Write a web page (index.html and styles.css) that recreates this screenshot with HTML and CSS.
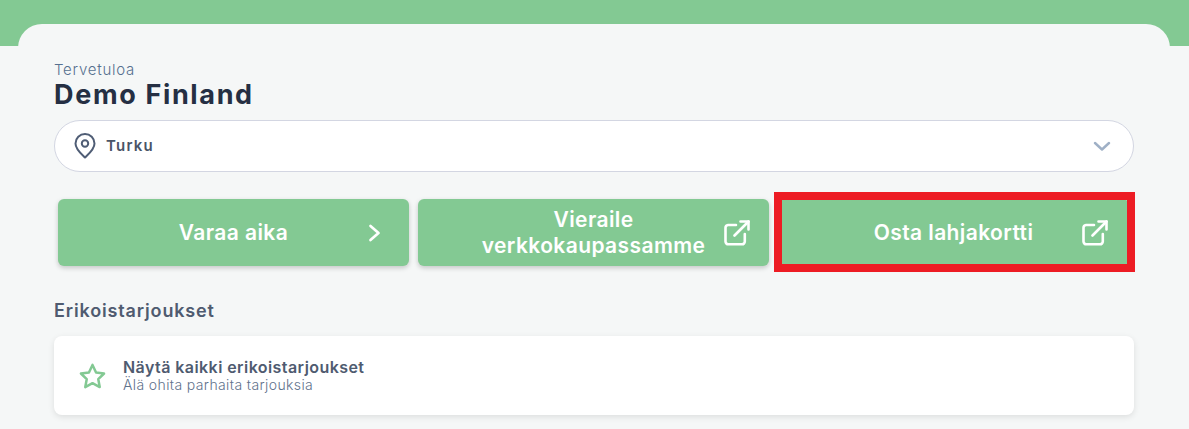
FILE: index.html
```html
<!DOCTYPE html>
<html lang="fi">
<head>
  <meta charset="UTF-8">
  <title>Demo Finland</title>
  <link rel="stylesheet" href="styles.css">
</head>
<body>
  <div class="panel">
    <div class="greeting">Tervetuloa</div>
    <h1 class="name">Demo Finland</h1>
    <div class="location">
      <svg class="pin" viewBox="0 0 22 26" width="22" height="26" fill="none" stroke="#4f5d75" stroke-width="2">
        <path d="M11 24.5 C8 21.5 1.5 16.5 1.5 10.5 A9.5 9.5 0 0 1 20.5 10.5 C20.5 16.5 14 21.500 11 24.500 Z" stroke-linejoin="round"/>
        <circle cx="11" cy="10.500" r="3.200"/>
      </svg>
      <span class="location-name">Turku</span>
      <svg class="chevron-down" viewBox="0 0 18 10" width="18" height="10" fill="none" stroke="#9fb0c6" stroke-width="2.400" stroke-linecap="round" stroke-linejoin="round">
        <path d="M2 2 L9 8.500 L16 2"/>
      </svg>
    </div>
    <div class="actions">
      <a class="action action-next">
        <span class="action-label">Varaa aika</span>
        <svg class="action-icon" viewBox="0 0 14 20" width="14" height="20" fill="none" stroke="#fff" stroke-width="2.700" stroke-linecap="round" stroke-linejoin="round">
          <path d="M2.500 3 L10.500 10 L2.500 17"/>
        </svg>
      </a>
      <a class="action">
        <span class="action-label">Vieraile verkkokaupassamme</span>
        <svg class="action-icon" viewBox="0 0 26 26" width="26" height="26" fill="none" stroke="#fff" stroke-width="2.600" stroke-linecap="round" stroke-linejoin="round">
          <path d="M12 5 H4 A2.800 2.800 0 0 0 1.500 7.800 V21.500 A2.800 2.800 0 0 0 4.300 24.300 H18 A2.800 2.800 0 0 0 20.800 21.500 V14"/>
          <path d="M16.500 1.500 H24.500 V9.500"/>
          <path d="M24.500 1.500 L10.500 15.500"/>
        </svg>
      </a>
      <a class="action action-marked">
        <span class="action-label">Osta lahjakortti</span>
        <svg class="action-icon" viewBox="0 0 26 26" width="26" height="26" fill="none" stroke="#fff" stroke-width="2.600" stroke-linecap="round" stroke-linejoin="round">
          <path d="M12 5 H4 A2.800 2.800 0 0 0 1.500 7.800 V21.500 A2.800 2.800 0 0 0 4.300 24.300 H18 A2.800 2.800 0 0 0 20.800 21.500 V14"/>
          <path d="M16.500 1.500 H24.500 V9.500"/>
          <path d="M24.500 1.500 L10.500 15.500"/>
        </svg>
      </a>
    </div>
    <h2 class="section-title">Erikoistarjoukset</h2>
    <div class="offer">
      <svg class="star" viewBox="0 0 28 27" width="27" height="26" fill="none" stroke="#83c993" stroke-width="2.600" stroke-linejoin="round">
        <path d="M14 2 L17.700 9.800 L26 10.900 L20 16.800 L21.500 25 L14 21 L6.500 25 L8 16.800 L2 10.900 L10.300 9.800 Z"/>
      </svg>
      <div>
        <div class="offer-title">Näytä kaikki erikoistarjoukset</div>
        <div class="offer-sub">Älä ohita parhaita tarjouksia</div>
      </div>
    </div>
  </div>
</body>
</html>
```

FILE: styles.css
```css
html, body {
  height: 100%;
}
body {
  margin: 0;
  background: linear-gradient(#83c993 46px, #f5f7f7 46px);
  font-family: Inter, "Noto Sans", Arial, sans-serif;
  overflow: hidden;
}
.panel {
  margin: 24px 19px 0 18px;
  padding: 37px 36px 0 36px;
  background: #f5f7f7;
  border-radius: 24px 24px 0 0;
}
.greeting {
  font-size: 15px;
  line-height: 18px;
  letter-spacing: 0.75px;
  font-weight: 300;
  color: #56708f;
}
.name {
  margin: 0 0 9px 0;
  font-size: 27px;
  line-height: 32px;
  letter-spacing: 1.65px;
  font-weight: 700;
  color: #252f43;
}
.location {
  display: flex;
  align-items: center;
  height: 52px;
  box-sizing: border-box;
  padding: 0 22px 0 19px;
  background: #fff;
  border: 1px solid #d3d6e2;
  border-radius: 26px;
}
.location-name {
  flex: 1;
  margin: 0 0 2px 10px;
  font-size: 15px;
  letter-spacing: 1.2px;
  font-weight: 600;
  color: #4a5468;
}
.actions {
  display: grid;
  grid-template-columns: repeat(3, 1fr);
  gap: 9px;
  margin: 27px 5px 0 4px;
}
.action {
  position: relative;
  display: grid;
  grid-template-columns: 60px 1fr 60px;
  align-items: center;
  height: 67px;
  background: #83c993;
  border-radius: 6px;
  box-shadow: 0 2px 5px rgba(0,0,0,0.2);
  color: #fff;
  font-size: 21px;
  line-height: 26px;
  letter-spacing: 0.4px;
  font-weight: 600;
  text-align: center;
}
.action-label {
  grid-column: 2;
}
.action-icon {
  grid-column: 3;
  justify-self: end;
  margin-right: 19px;
}
.action-next .action-icon {
  margin-right: 27px;
}
.action-marked .action-icon {
  margin-right: 21px;
}
.action-marked::after {
  content: "";
  position: absolute;
  top: -7px;
  right: -6px;
  bottom: -6px;
  left: -4px;
  border: 8px solid #ed1c24;
}
.section-title {
  margin: 34px 0 14px 0;
  font-size: 18px;
  line-height: 22px;
  letter-spacing: 0.85px;
  font-weight: 600;
  color: #4f5b70;
}
.offer {
  display: flex;
  align-items: center;
  gap: 17px;
  height: 79px;
  padding-left: 25px;
  background: #fff;
  border-radius: 8px;
  box-shadow: 0 2px 6px rgba(0,0,0,0.1);
}
.offer-title {
  font-size: 16px;
  line-height: 18px;
  letter-spacing: 0.43px;
  font-weight: 600;
  color: #4f5b70;
}
.offer-sub {
  margin-top: 1px;
  font-size: 14px;
  line-height: 16px;
  letter-spacing: 0.38px;
  font-weight: 300;
  color: #5f728c;
}
```
